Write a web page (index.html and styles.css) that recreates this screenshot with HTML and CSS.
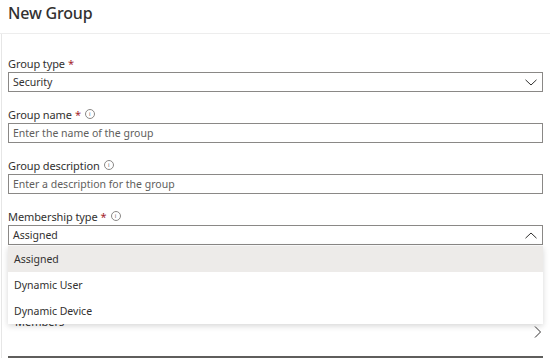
FILE: index.html
```html
<!DOCTYPE html>
<html lang="en">
<head>
    <meta charset="UTF-8">
    <title>New Group</title>
    <link rel="stylesheet" href="styles.css">
</head>
<body>

<div class="blade">
    <div class="blade-header">
        <h1>New Group</h1>
    </div>
    <div class="blade-content">
        <div class="field">
            <label>Group type <span class="req">*</span></label>
            <div class="select">
                <span>Security</span>
                <svg class="chev" width="12" height="7" viewBox="0 0 12 7"><path d="M0.5 0.8 L6 6 L11.5 0.8" fill="none" stroke="#323130" stroke-width="1"/></svg>
            </div>
        </div>
        <div class="field">
            <label>Group name <span class="req">*</span> <span class="info">i</span></label>
            <div class="input placeholder">Enter the name of the group</div>
        </div>
        <div class="field">
            <label>Group description <span class="info">i</span></label>
            <div class="input placeholder">Enter a description for the group</div>
        </div>
        <div class="field">
            <label>Membership type <span class="req">*</span> <span class="info">i</span></label>
            <div class="select-wrap">
                <div class="select">
                    <span>Assigned</span>
                    <svg class="chev" width="12" height="7" viewBox="0 0 12 7"><path d="M0.5 6.2 L6 1 L11.5 6.2" fill="none" stroke="#323130" stroke-width="1"/></svg>
                </div>
                <ul class="menu">
                    <li class="active">Assigned</li>
                    <li>Dynamic User</li>
                    <li>Dynamic Device</li>
                </ul>
            </div>
        </div>
        <div class="members-row">
            <span class="members-label">Members</span>
            <svg width="8" height="12" viewBox="0 0 8 12"><path d="M1 0.5 L6.5 6 L1 11.5" fill="none" stroke="#323130" stroke-width="1"/></svg>
        </div>
        <div class="footer-line"></div>
    </div>
</div>

</body>
</html>
```

FILE: styles.css
```css
body {
    margin: 0;
    font-family: "Noto Sans", "Open Sans", sans-serif;
    color: #323130;
    background: #fff;
}
.blade {
    width: 550px;
    height: 362px;
    overflow: hidden;
}
.blade-header {
    height: 33px;
    border-bottom: 1px solid #ededed;
    padding-left: 8px;
}
.blade-header h1 {
    margin: 0;
    padding-top: 3px;
    font-size: 16px;
    font-weight: 500;
    letter-spacing: -0.2px;
    line-height: 20px;
}
.blade-content {
    margin-left: 1px;
    border-left: 1px solid #e6e6e6;
    padding: 21px 7px 0 6px;
}
.field {
    margin-bottom: 14px;
}
.field label {
    display: flex;
    align-items: center;
    gap: 3px;
    height: 16px;
    margin-bottom: 1px;
    font-size: 11px;
    letter-spacing: -0.1px;
}
.req {
    color: #a4262c;
}
.info {
    display: inline-flex;
    align-items: center;
    justify-content: center;
    width: 8px;
    height: 8px;
    border: 1px solid #8a8886;
    border-radius: 50%;
    font-size: 6px;
    line-height: 1;
    color: #605e5c;
    margin-left: 1px;
}
.select, .input {
    height: 18px;
    border: 1px solid #8a8886;
    display: flex;
    align-items: center;
    justify-content: space-between;
    padding: 0 5px 0 4px;
    font-size: 10.5px;
}
.placeholder {
    color: #605e5c;
}
.select-wrap {
    position: relative;
}
.menu {
    position: absolute;
    left: 0;
    right: 0;
    top: 21px;
    margin: 0;
    padding: 0;
    list-style: none;
    background: #fff;
    box-shadow: 0 2px 6px rgba(0, 0, 0, 0.16);
    z-index: 2;
}
.menu li {
    height: 26px;
    line-height: 26px;
    padding-left: 6px;
    font-size: 10.5px;
}
.menu li.active {
    background: #edebe9;
}
.members-row {
    display: flex;
    justify-content: space-between;
    align-items: center;
    height: 36px;
    margin-top: 69px;
    padding: 0 1px 0 7px;
    font-size: 11px;
}
.members-label {
    align-self: flex-start;
    line-height: 16px;
}
.footer-line {
    margin-top: 6px;
    height: 2px;
    background: #5f5e5c;
}
```
